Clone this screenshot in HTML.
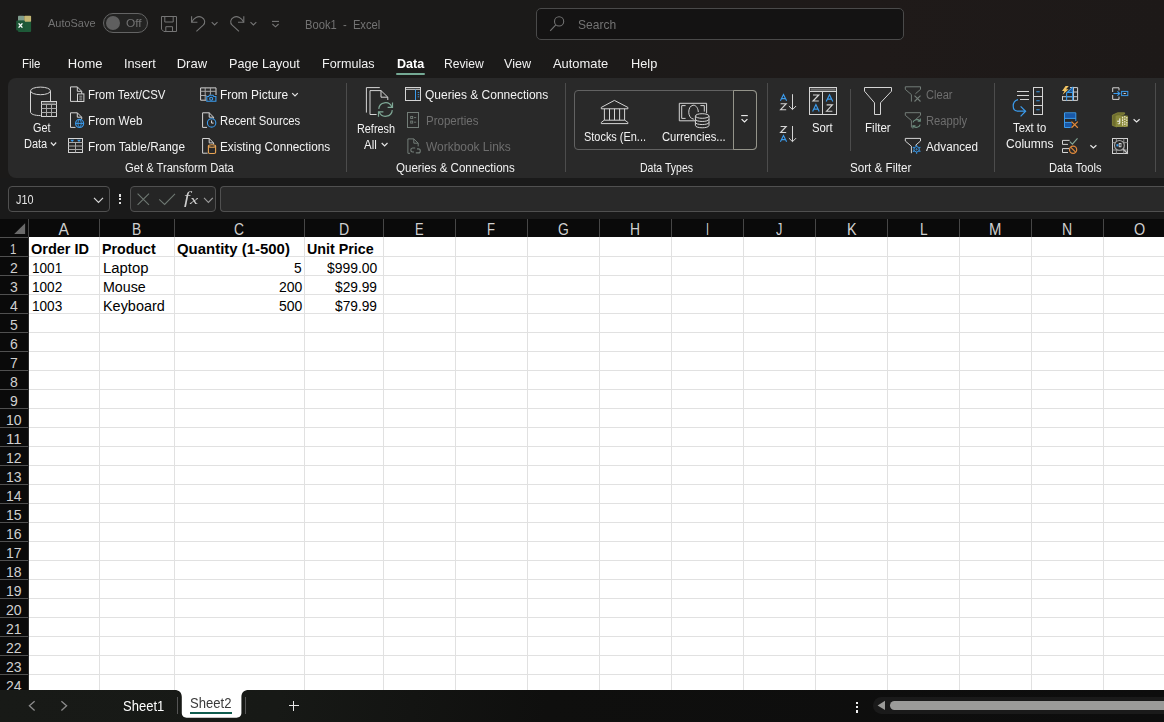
<!DOCTYPE html>
<html><head><meta charset="utf-8"><title>Book1 - Excel</title>
<style>
html,body{margin:0;padding:0;}
html{width:1164px;height:722px;overflow:hidden;}
body{width:1164px;height:722px;overflow:hidden;position:relative;background:#1b1a19;font-family:"Liberation Sans",sans-serif;}
.b{position:absolute;display:block;}
.gs{position:absolute;left:0;top:0;width:1164px;height:722px;will-change:transform;}
.lcd{position:absolute;left:0;top:0;width:1164px;height:722px;}
.t{position:absolute;white-space:nowrap;line-height:1;transform-origin:0 50%;display:block;}
svg{overflow:visible;}
</style></head><body>
<div class="b" style="left:0px;top:0px;width:1164px;height:722px;background:linear-gradient(90deg,#1b1a19 0%,#1b1a19 45%,#1f1a19 75%,#1d1918 100%);"></div>
<div class="b" style="left:536px;top:8px;width:368px;height:32px;background:#141313;box-sizing:border-box;border:1px solid #4a4a4a;border-radius:5px;"></div>
<div class="b" style="left:103px;top:13px;width:45px;height:20px;background:#232322;box-sizing:border-box;border:1px solid #646464;border-radius:10px;"></div>
<div class="b" style="left:106px;top:16.1px;width:13.8px;height:13.8px;background:#5f5f5f;border-radius:7px;"></div>
<div class="b" style="left:396px;top:73px;width:29px;height:2px;background:#74a994;border-radius:1px;"></div>
<div class="b" style="left:8px;top:78px;width:1156px;height:100px;background:#292929;border-radius:8px 0 0 8px;"></div>
<div class="b" style="left:0px;top:178px;width:1164px;height:41px;background:#1a1a1a;"></div>
<div class="b" style="left:346px;top:83px;width:1px;height:89px;background:#4c4c4c;"></div>
<div class="b" style="left:565px;top:83px;width:1px;height:89px;background:#4c4c4c;"></div>
<div class="b" style="left:767px;top:83px;width:1px;height:89px;background:#4c4c4c;"></div>
<div class="b" style="left:994px;top:83px;width:1px;height:89px;background:#4c4c4c;"></div>
<div class="b" style="left:1155px;top:83px;width:1px;height:89px;background:#4c4c4c;"></div>
<div class="b" style="left:850px;top:89px;width:1px;height:62px;background:#4c4c4c;"></div>
<div class="b" style="left:574px;top:90px;width:183px;height:60px;box-sizing:border-box;border:1px solid #626262;border-radius:4px;"></div>
<div class="b" style="left:733px;top:90px;width:24px;height:60px;box-sizing:border-box;border:1px solid #94948a;border-radius:0 4px 4px 0;"></div>
<div class="b" style="left:8px;top:186px;width:102px;height:26px;background:#1c1c1c;box-sizing:border-box;border:1px solid #505050;border-radius:4px;"></div>
<div class="b" style="left:130px;top:186px;width:86px;height:26px;background:#252525;box-sizing:border-box;border:1px solid #505050;border-radius:4px;"></div>
<div class="b" style="left:220px;top:186px;width:944px;height:26px;background:#292929;box-sizing:border-box;border:1px solid #505050;border-right:none;border-radius:4px 0 0 4px;"></div>
<div class="b" style="left:118.8px;top:194.1px;width:2.6px;height:2.5px;background:#e0e0e0;"></div>
<div class="b" style="left:118.8px;top:197.8px;width:2.6px;height:2.5px;background:#e0e0e0;"></div>
<div class="b" style="left:118.8px;top:201.6px;width:2.6px;height:2.5px;background:#e0e0e0;"></div>
<div class="b" style="left:0px;top:219px;width:1164px;height:471px;background:#ffffff;"></div>
<div class="b" style="left:0px;top:219px;width:1164px;height:18px;background:#0a0a0a;"></div>
<div class="b" style="left:0px;top:219px;width:28px;height:471px;background:#0a0a0a;"></div>
<svg class="b" style="left:11px;top:222px" width="15" height="15" viewBox="0 0 15 15"><path d="M14.1 1.2 L14.1 12.1 L3.2 12.1 Z" fill="#6a6a6a"/></svg>
<div class="b" style="left:28px;top:237px;width:1px;height:453px;background:#e1e1e1;"></div>
<div class="b" style="left:28px;top:219px;width:1px;height:18px;background:#464646;"></div>
<div class="b" style="left:99px;top:237px;width:1px;height:453px;background:#e1e1e1;"></div>
<div class="b" style="left:99px;top:219px;width:1px;height:18px;background:#464646;"></div>
<div class="b" style="left:174px;top:237px;width:1px;height:453px;background:#e1e1e1;"></div>
<div class="b" style="left:174px;top:219px;width:1px;height:18px;background:#464646;"></div>
<div class="b" style="left:304px;top:237px;width:1px;height:453px;background:#e1e1e1;"></div>
<div class="b" style="left:304px;top:219px;width:1px;height:18px;background:#464646;"></div>
<div class="b" style="left:383px;top:237px;width:1px;height:453px;background:#e1e1e1;"></div>
<div class="b" style="left:383px;top:219px;width:1px;height:18px;background:#464646;"></div>
<div class="b" style="left:455px;top:237px;width:1px;height:453px;background:#e1e1e1;"></div>
<div class="b" style="left:455px;top:219px;width:1px;height:18px;background:#464646;"></div>
<div class="b" style="left:527px;top:237px;width:1px;height:453px;background:#e1e1e1;"></div>
<div class="b" style="left:527px;top:219px;width:1px;height:18px;background:#464646;"></div>
<div class="b" style="left:599px;top:237px;width:1px;height:453px;background:#e1e1e1;"></div>
<div class="b" style="left:599px;top:219px;width:1px;height:18px;background:#464646;"></div>
<div class="b" style="left:671px;top:237px;width:1px;height:453px;background:#e1e1e1;"></div>
<div class="b" style="left:671px;top:219px;width:1px;height:18px;background:#464646;"></div>
<div class="b" style="left:743px;top:237px;width:1px;height:453px;background:#e1e1e1;"></div>
<div class="b" style="left:743px;top:219px;width:1px;height:18px;background:#464646;"></div>
<div class="b" style="left:815px;top:237px;width:1px;height:453px;background:#e1e1e1;"></div>
<div class="b" style="left:815px;top:219px;width:1px;height:18px;background:#464646;"></div>
<div class="b" style="left:887px;top:237px;width:1px;height:453px;background:#e1e1e1;"></div>
<div class="b" style="left:887px;top:219px;width:1px;height:18px;background:#464646;"></div>
<div class="b" style="left:959px;top:237px;width:1px;height:453px;background:#e1e1e1;"></div>
<div class="b" style="left:959px;top:219px;width:1px;height:18px;background:#464646;"></div>
<div class="b" style="left:1031px;top:237px;width:1px;height:453px;background:#e1e1e1;"></div>
<div class="b" style="left:1031px;top:219px;width:1px;height:18px;background:#464646;"></div>
<div class="b" style="left:1103px;top:237px;width:1px;height:453px;background:#e1e1e1;"></div>
<div class="b" style="left:1103px;top:219px;width:1px;height:18px;background:#464646;"></div>
<div class="b" style="left:29px;top:256px;width:1135px;height:1px;background:#e1e1e1;"></div>
<div class="b" style="left:0px;top:256px;width:29px;height:1px;background:#505050;"></div>
<div class="b" style="left:29px;top:275px;width:1135px;height:1px;background:#e1e1e1;"></div>
<div class="b" style="left:0px;top:275px;width:29px;height:1px;background:#505050;"></div>
<div class="b" style="left:29px;top:294px;width:1135px;height:1px;background:#e1e1e1;"></div>
<div class="b" style="left:0px;top:294px;width:29px;height:1px;background:#505050;"></div>
<div class="b" style="left:29px;top:313px;width:1135px;height:1px;background:#e1e1e1;"></div>
<div class="b" style="left:0px;top:313px;width:29px;height:1px;background:#505050;"></div>
<div class="b" style="left:29px;top:332px;width:1135px;height:1px;background:#e1e1e1;"></div>
<div class="b" style="left:0px;top:332px;width:29px;height:1px;background:#505050;"></div>
<div class="b" style="left:29px;top:351px;width:1135px;height:1px;background:#e1e1e1;"></div>
<div class="b" style="left:0px;top:351px;width:29px;height:1px;background:#505050;"></div>
<div class="b" style="left:29px;top:370px;width:1135px;height:1px;background:#e1e1e1;"></div>
<div class="b" style="left:0px;top:370px;width:29px;height:1px;background:#505050;"></div>
<div class="b" style="left:29px;top:389px;width:1135px;height:1px;background:#e1e1e1;"></div>
<div class="b" style="left:0px;top:389px;width:29px;height:1px;background:#505050;"></div>
<div class="b" style="left:29px;top:408px;width:1135px;height:1px;background:#e1e1e1;"></div>
<div class="b" style="left:0px;top:408px;width:29px;height:1px;background:#505050;"></div>
<div class="b" style="left:29px;top:427px;width:1135px;height:1px;background:#e1e1e1;"></div>
<div class="b" style="left:0px;top:427px;width:29px;height:1px;background:#505050;"></div>
<div class="b" style="left:29px;top:446px;width:1135px;height:1px;background:#e1e1e1;"></div>
<div class="b" style="left:0px;top:446px;width:29px;height:1px;background:#505050;"></div>
<div class="b" style="left:29px;top:465px;width:1135px;height:1px;background:#e1e1e1;"></div>
<div class="b" style="left:0px;top:465px;width:29px;height:1px;background:#505050;"></div>
<div class="b" style="left:29px;top:484px;width:1135px;height:1px;background:#e1e1e1;"></div>
<div class="b" style="left:0px;top:484px;width:29px;height:1px;background:#505050;"></div>
<div class="b" style="left:29px;top:503px;width:1135px;height:1px;background:#e1e1e1;"></div>
<div class="b" style="left:0px;top:503px;width:29px;height:1px;background:#505050;"></div>
<div class="b" style="left:29px;top:522px;width:1135px;height:1px;background:#e1e1e1;"></div>
<div class="b" style="left:0px;top:522px;width:29px;height:1px;background:#505050;"></div>
<div class="b" style="left:29px;top:541px;width:1135px;height:1px;background:#e1e1e1;"></div>
<div class="b" style="left:0px;top:541px;width:29px;height:1px;background:#505050;"></div>
<div class="b" style="left:29px;top:560px;width:1135px;height:1px;background:#e1e1e1;"></div>
<div class="b" style="left:0px;top:560px;width:29px;height:1px;background:#505050;"></div>
<div class="b" style="left:29px;top:579px;width:1135px;height:1px;background:#e1e1e1;"></div>
<div class="b" style="left:0px;top:579px;width:29px;height:1px;background:#505050;"></div>
<div class="b" style="left:29px;top:598px;width:1135px;height:1px;background:#e1e1e1;"></div>
<div class="b" style="left:0px;top:598px;width:29px;height:1px;background:#505050;"></div>
<div class="b" style="left:29px;top:617px;width:1135px;height:1px;background:#e1e1e1;"></div>
<div class="b" style="left:0px;top:617px;width:29px;height:1px;background:#505050;"></div>
<div class="b" style="left:29px;top:636px;width:1135px;height:1px;background:#e1e1e1;"></div>
<div class="b" style="left:0px;top:636px;width:29px;height:1px;background:#505050;"></div>
<div class="b" style="left:29px;top:655px;width:1135px;height:1px;background:#e1e1e1;"></div>
<div class="b" style="left:0px;top:655px;width:29px;height:1px;background:#505050;"></div>
<div class="b" style="left:29px;top:674px;width:1135px;height:1px;background:#e1e1e1;"></div>
<div class="b" style="left:0px;top:674px;width:29px;height:1px;background:#505050;"></div>
<div class="b" style="left:28px;top:237px;width:1px;height:453px;background:#2a2a2a;"></div>
<div class="b" style="left:0px;top:237px;width:28px;height:1px;background:#505050;"></div>
<div class="lcd"><span class="t" id="t45" style="left:58.60px;top:222.29px;font-size:15.6px;color:#d0d0d0;">A</span>
<span class="t" id="t46" style="left:132.20px;top:222.29px;font-size:15.6px;color:#d0d0d0;transform:scaleX(0.8841);">B</span>
<span class="t" id="t47" style="left:234.30px;top:222.29px;font-size:15.6px;color:#d0d0d0;transform:scaleX(0.8877);">C</span>
<span class="t" id="t48" style="left:338.70px;top:222.29px;font-size:15.6px;color:#d0d0d0;transform:scaleX(0.9054);">D</span>
<span class="t" id="t49" style="left:415.00px;top:222.29px;font-size:15.6px;color:#d0d0d0;transform:scaleX(0.8264);">E</span>
<span class="t" id="t50" style="left:487.30px;top:222.29px;font-size:15.6px;color:#d0d0d0;transform:scaleX(0.8393);">F</span>
<span class="t" id="t51" style="left:557.90px;top:222.29px;font-size:15.6px;color:#d0d0d0;transform:scaleX(0.8896);">G</span>
<span class="t" id="t52" style="left:630.30px;top:222.29px;font-size:15.6px;color:#d0d0d0;transform:scaleX(0.8877);">H</span>
<span class="t" id="t53" style="left:705.80px;top:222.29px;font-size:15.6px;color:#d0d0d0;transform:scaleX(0.6906);">I</span>
<span class="t" id="t54" style="left:776.10px;top:222.29px;font-size:15.6px;color:#d0d0d0;transform:scaleX(0.8208);">J</span>
<span class="t" id="t55" style="left:846.50px;top:222.29px;font-size:15.6px;color:#d0d0d0;transform:scaleX(0.9225);">K</span>
<span class="t" id="t56" style="left:919.50px;top:222.29px;font-size:15.6px;color:#d0d0d0;transform:scaleX(0.8748);">L</span>
<span class="t" id="t57" style="left:989.10px;top:222.29px;font-size:15.6px;color:#d0d0d0;transform:scaleX(0.9538);">M</span>
<span class="t" id="t58" style="left:1062.20px;top:222.29px;font-size:15.6px;color:#d0d0d0;transform:scaleX(0.9054);">N</span>
<span class="t" id="t59" style="left:1133.70px;top:222.29px;font-size:15.6px;color:#d0d0d0;transform:scaleX(0.9225);">O</span>
<span class="t" id="t60" style="left:10.30px;top:241.05px;font-size:15.3px;color:#d0d0d0;transform:scaleX(0.7516);">1</span>
<span class="t" id="t61" style="left:10.10px;top:260.05px;font-size:15.3px;color:#d0d0d0;transform:scaleX(0.9160);">2</span>
<span class="t" id="t62" style="left:10.10px;top:279.05px;font-size:15.3px;color:#d0d0d0;transform:scaleX(0.9160);">3</span>
<span class="t" id="t63" style="left:10.10px;top:298.05px;font-size:15.3px;color:#d0d0d0;transform:scaleX(0.9160);">4</span>
<span class="t" id="t64" style="left:10.10px;top:317.05px;font-size:15.3px;color:#d0d0d0;transform:scaleX(0.9160);">5</span>
<span class="t" id="t65" style="left:10.10px;top:336.05px;font-size:15.3px;color:#d0d0d0;transform:scaleX(0.9160);">6</span>
<span class="t" id="t66" style="left:10.10px;top:355.05px;font-size:15.3px;color:#d0d0d0;transform:scaleX(0.9160);">7</span>
<span class="t" id="t67" style="left:10.10px;top:374.05px;font-size:15.3px;color:#d0d0d0;transform:scaleX(0.9160);">8</span>
<span class="t" id="t68" style="left:10.10px;top:393.05px;font-size:15.3px;color:#d0d0d0;transform:scaleX(0.9160);">9</span>
<span class="t" id="t69" style="left:6.20px;top:412.05px;font-size:15.3px;color:#d0d0d0;transform:scaleX(0.9168);">10</span>
<span class="t" id="t70" style="left:6.20px;top:431.05px;font-size:15.3px;color:#d0d0d0;transform:scaleX(0.9817);">11</span>
<span class="t" id="t71" style="left:6.20px;top:450.05px;font-size:15.3px;color:#d0d0d0;transform:scaleX(0.9168);">12</span>
<span class="t" id="t72" style="left:6.20px;top:469.05px;font-size:15.3px;color:#d0d0d0;transform:scaleX(0.9168);">13</span>
<span class="t" id="t73" style="left:6.20px;top:488.05px;font-size:15.3px;color:#d0d0d0;transform:scaleX(0.9168);">14</span>
<span class="t" id="t74" style="left:6.20px;top:507.05px;font-size:15.3px;color:#d0d0d0;transform:scaleX(0.9168);">15</span>
<span class="t" id="t75" style="left:6.20px;top:526.05px;font-size:15.3px;color:#d0d0d0;transform:scaleX(0.9168);">16</span>
<span class="t" id="t76" style="left:6.20px;top:545.05px;font-size:15.3px;color:#d0d0d0;transform:scaleX(0.9168);">17</span>
<span class="t" id="t77" style="left:6.20px;top:564.05px;font-size:15.3px;color:#d0d0d0;transform:scaleX(0.9168);">18</span>
<span class="t" id="t78" style="left:6.20px;top:583.05px;font-size:15.3px;color:#d0d0d0;transform:scaleX(0.9168);">19</span>
<span class="t" id="t79" style="left:6.20px;top:602.05px;font-size:15.3px;color:#d0d0d0;transform:scaleX(0.9168);">20</span>
<span class="t" id="t80" style="left:6.20px;top:621.05px;font-size:15.3px;color:#d0d0d0;transform:scaleX(0.9168);">21</span>
<span class="t" id="t81" style="left:6.20px;top:640.05px;font-size:15.3px;color:#d0d0d0;transform:scaleX(0.9168);">22</span>
<span class="t" id="t82" style="left:6.20px;top:659.05px;font-size:15.3px;color:#d0d0d0;transform:scaleX(0.9168);">23</span>
<span class="t" id="t83" style="left:6.20px;top:678.05px;font-size:15.3px;color:#d0d0d0;transform:scaleX(0.9168);">24</span>
<span class="t" id="t84" style="left:31.20px;top:241.76px;font-size:14.7px;color:#000000;font-weight:bold;transform:scaleX(0.9878);">Order ID</span>
<span class="t" id="t85" style="left:102.30px;top:241.76px;font-size:14.7px;color:#000000;font-weight:bold;transform:scaleX(0.9676);">Product</span>
<span class="t" id="t86" style="left:176.60px;top:241.76px;font-size:14.7px;color:#000000;font-weight:bold;transform:scaleX(1.0171);">Quantity (1-500)</span>
<span class="t" id="t87" style="left:307.00px;top:241.76px;font-size:14.7px;color:#000000;font-weight:bold;transform:scaleX(0.9736);">Unit Price</span>
<span class="t" id="t88" style="left:31.75px;top:260.76px;font-size:14.7px;color:#000000;transform:scaleX(0.9254);">1001</span>
<span class="t" id="t89" style="left:31.75px;top:279.76px;font-size:14.7px;color:#000000;transform:scaleX(0.9254);">1002</span>
<span class="t" id="t90" style="left:31.75px;top:298.76px;font-size:14.7px;color:#000000;transform:scaleX(0.9254);">1003</span>
<span class="t" id="t91" style="left:102.75px;top:260.76px;font-size:14.7px;color:#000000;transform:scaleX(1.0125);">Laptop</span>
<span class="t" id="t92" style="left:102.75px;top:279.76px;font-size:14.7px;color:#000000;transform:scaleX(0.9695);">Mouse</span>
<span class="t" id="t93" style="left:102.75px;top:298.76px;font-size:14.7px;color:#000000;transform:scaleX(0.9821);">Keyboard</span>
<span class="t" id="t94" style="left:293.60px;top:260.76px;font-size:14.7px;color:#000000;transform:scaleX(0.9361);">5</span>
<span class="t" id="t95" style="left:278.60px;top:279.76px;font-size:14.7px;color:#000000;transform:scaleX(0.9504);">200</span>
<span class="t" id="t96" style="left:278.60px;top:298.76px;font-size:14.7px;color:#000000;transform:scaleX(0.9504);">500</span>
<span class="t" id="t97" style="left:326.80px;top:260.76px;font-size:14.7px;color:#000000;transform:scaleX(0.9474);">$999.00</span>
<span class="t" id="t98" style="left:334.50px;top:279.76px;font-size:14.7px;color:#000000;transform:scaleX(0.9346);">$29.99</span>
<span class="t" id="t99" style="left:334.50px;top:298.76px;font-size:14.7px;color:#000000;transform:scaleX(0.9346);">$79.99</span></div>
<div class="b" style="left:0px;top:690px;width:1164px;height:32px;background:linear-gradient(100deg,#181a17 0%,#171916 24%,#0f0f0e 47%,#0d0d0d 100%);"></div>
<svg class="b" style="left:0px;top:0px" width="1164" height="722" viewBox="0 0 1164 722"><path d="M174.5 690 C179 690 181.8 692.6 181.8 697 V713 C181.8 715.8 184 717.7 186.6 717.7 H236.6 C239.2 717.7 241.4 715.8 241.4 713 V697 C241.4 692.6 244.2 690 248.7 690 Z" fill="#ffffff"/></svg>
<div class="b" style="left:190px;top:712px;width:42px;height:2px;background:#0f5c4e;"></div>
<div class="b" style="left:177px;top:697px;width:1px;height:17px;background:#555555;"></div>
<div class="b" style="left:245px;top:697px;width:1px;height:17px;background:#555555;"></div>
<svg class="b" style="left:24px;top:697px" width="50" height="18" viewBox="0 0 50 18"><path d="M10.6 4.2 L5.4 8.8 L10.6 13.4" fill="none" stroke="#8c8c8c" stroke-width="1.3"/><path d="M37.4 4.2 L42.6 8.8 L37.4 13.4" fill="none" stroke="#8c8c8c" stroke-width="1.3"/></svg>
<div class="b" style="left:288.5px;top:705.2px;width:10.5px;height:1.2px;background:#e6e6e6;"></div>
<div class="b" style="left:293.1px;top:700.6px;width:1.2px;height:10.5px;background:#e6e6e6;"></div>
<div class="b" style="left:856px;top:701.5px;width:2.4px;height:2.4px;background:#f0f0f0;"></div>
<div class="b" style="left:856px;top:706px;width:2.4px;height:2.4px;background:#f0f0f0;"></div>
<div class="b" style="left:856px;top:710.4px;width:2.4px;height:2.4px;background:#f0f0f0;"></div>
<div class="b" style="left:873px;top:697px;width:291px;height:17px;background:#1a1a1a;border-radius:8.5px 0 0 8.5px;"></div>
<svg class="b" style="left:876px;top:699px" width="12" height="13" viewBox="0 0 12 13"><path d="M9 1.8 L1.6 6.4 L9 11 Z" fill="#9a9a98"/></svg>
<div class="b" style="left:890px;top:701px;width:274px;height:9px;background:#9b9b99;border-radius:4.5px 0 0 4.5px;"></div>
<svg class="b" style="left:0;top:0" width="1164" height="722" viewBox="0 0 1164 722" fill="none" stroke-linecap="butt" stroke-linejoin="miter"><rect x="18" y="15.8" width="6.2" height="5.4" rx="0.8" fill="#7e9c8c"/>
<rect x="24.2" y="15.8" width="6.9" height="6.2" rx="0.8" fill="#c3b674"/>
<path d="M18 20.8 H24.2 V21.8 H31.1 V31 Q31.1 32 30.1 32 H19 Q18 32 18 31 Z" fill="#1e5a38"/>
<rect x="16.2" y="20.4" width="8.6" height="10.2" rx="1" fill="#1d5736"/>
<path d="M18.6 23.4 L22.4 27.6 M22.4 23.4 L18.6 27.6" stroke="#ffffff" stroke-width="1.4" fill="none" />
<path d="M161.5 16.5 H176.5 V31.5 H163.8 L161.5 29.2 Z" stroke="#757575" stroke-width="1" fill="none" />
<path d="M164.8 16.5 V22 H173.2 V16.5" stroke="#757575" stroke-width="1" fill="none" />
<path d="M165.8 31.5 V26.7 H172.5 V31.5" stroke="#757575" stroke-width="1" fill="none" />
<path d="M191.6 16.3 V22.3 H197.4" stroke="#757575" stroke-width="1.1" fill="none" />
<path d="M191.8 22.1 C193.6 18 198 15.4 201.6 17.2 C205.2 19 205.6 22.8 203.2 25.2 L196.4 31.3" stroke="#757575" stroke-width="1.1" fill="none" />
<path d="M211.7 22.2 L214.6 25 L217.5 22.2" stroke="#757575" stroke-width="1.1" fill="none" />
<path d="M243.8 16.3 V22.3 H238" stroke="#757575" stroke-width="1.1" fill="none" />
<path d="M243.6 22.1 C241.8 18 237.4 15.4 233.8 17.2 C230.2 19 229.8 22.8 232.2 25.2 L239 31.3" stroke="#757575" stroke-width="1.1" fill="none" />
<path d="M250.5 22.2 L253.4 25 L256.3 22.2" stroke="#757575" stroke-width="1.1" fill="none" />
<path d="M272 21.4 H279" stroke="#757575" stroke-width="1.1" fill="none" />
<path d="M272.4 24 L275.5 26.8 L278.6 24" stroke="#757575" stroke-width="1.1" fill="none" />
<circle cx="559.1" cy="21.4" r="4.6" stroke="#727272" stroke-width="1.1" fill="none"/>
<path d="M555.8 24.8 L550.2 30.8" stroke="#727272" stroke-width="1.1" fill="none" />
<path d="M30.5 91.2 V112 C30.5 114 34.5 115.6 40.6 115.6" stroke="#d4d4d4" stroke-width="1" fill="none" />
<path d="M50.5 91.2 V101" stroke="#d4d4d4" stroke-width="1" fill="none" />
<ellipse cx="40.5" cy="90.9" rx="10" ry="3.8" stroke="#d4d4d4" stroke-width="1" fill="none"/>
<rect x="41.5" y="101.5" width="15" height="15" rx="0" stroke="#d4d4d4" stroke-width="1" fill="#292929"/>
<rect x="42.4" y="102.4" width="13.2" height="1.8" fill="#6a6a6a"/>
<path d="M41.5 104.5 H56.5 M41.5 108.5 H56.5 M41.5 112.5 H56.5 M46.5 104.5 V116.5 M51.5 104.5 V116.5" stroke="#a8a8a8" stroke-width="1" fill="none" />
<path d="M50.9 142.5 L53.55 145.3 L56.2 142.5" stroke="#e6e6e6" stroke-width="1.2" fill="none" />
<path d="M81.7 93.9 V91.30000000000001 L77.3 86.9 H70.5 V101.4 H77.4 M77.3 86.9 V91.30000000000001 H81.7" stroke="#d4d4d4" stroke-width="1" fill="none" />
<rect x="77.5" y="93.9" width="6.4" height="7.6" rx="0" stroke="#d4d4d4" stroke-width="1" fill="#292929"/>
<path d="M79.3 96.2 H82.2 M79.3 98 H82.2 M79.3 99.8 H82.2" stroke="#bdbdbd" stroke-width="0.8" fill="none" />
<path d="M81.7 119 V117.2 L77.3 112.8 H70.5 V127.4 H75.5 M77.3 112.8 V117.2 H81.7" stroke="#d4d4d4" stroke-width="1" fill="none" />
<circle cx="79.6" cy="123.4" r="4.0" stroke="#3b9bec" stroke-width="1.2" fill="none"/>
<path d="M75.6 123.4 H83.6 M79.6 119.4 C77.4 121.6 77.4 125.2 79.6 127.4 M79.6 119.4 C81.8 121.6 81.8 125.2 79.6 127.4" stroke="#3b9bec" stroke-width="1.0" fill="none" />
<rect x="68.5" y="138.5" width="14" height="14" rx="0" stroke="#d4d4d4" stroke-width="1" fill="none"/>
<path d="M68.5 142.5 H82.5 M68.5 146 H82.5 M68.5 149.5 H82.5 M75.5 142.5 V152.5" stroke="#a8a8a8" stroke-width="1" fill="none" />
<path d="M70.2 139.7 H74.2 L72.2 142 Z M77 139.7 H81 L79 142 Z" fill="#3b9bec"/>
<path d="M216 95 V87.9 H200.6 V100.2 H206" stroke="#d4d4d4" stroke-width="1" fill="none" />
<path d="M200.6 91.3 H216 M200.6 95.5 H206.4 M205.2 87.9 V100.2 M210.4 87.9 V94.8" stroke="#a8a8a8" stroke-width="1" fill="none" />
<path d="M206.8 96.5 H208.6 L209.4 95.3 H213 L213.8 96.5 H215.9 V101.3 H206.8 Z" stroke="#3b9bec" stroke-width="1.1" fill="#292929" />
<circle cx="211.2" cy="98.7" r="1.5" stroke="#3b9bec" stroke-width="1.1" fill="none"/>
<path d="M292.2 93.2 L295.0 96 L297.8 93.2" stroke="#e6e6e6" stroke-width="1.2" fill="none" />
<path d="M213.6 118.6 V117.2 L209.2 112.8 H202.6 V127.4 H207 M209.2 112.8 V117.2 H213.6" stroke="#d4d4d4" stroke-width="1" fill="none" />
<circle cx="211.6" cy="122.9" r="4.2" stroke="#3b9bec" stroke-width="1.1" fill="none"/>
<path d="M211.6 120.4 V123.1 H213.6" stroke="#e0e0e0" stroke-width="1" fill="none" />
<path d="M213.6 144.4 V142.9 L209.2 138.5 H202.6 V153.2 H207.6 M209.2 138.5 V142.9 H213.6" stroke="#d4d4d4" stroke-width="1" fill="none" />
<path d="M208.4 146 V152.4 C208.4 153.9 215.6 153.9 215.6 152.4 V146" stroke="#e9a555" stroke-width="1.1" fill="none" />
<ellipse cx="212" cy="146" rx="3.6" ry="1.3" stroke="#e9a555" stroke-width="1.1" fill="none"/>
<path d="M379.8 87.6 H366.4 V112.6" stroke="#d4d4d4" stroke-width="1" fill="none" />
<path d="M387.8 100 V97.2 L381 90.6 H370 V114.5 H376.6 M381 90.6 V97.2 H387.8" stroke="#d4d4d4" stroke-width="1" fill="none" />
<path d="M378.73 108.91 A6.8 6.8 0 0 1 391.80 106.95" stroke="#7fa896" stroke-width="1.2" fill="none" />
<path d="M392.5 102.4 V107.3 H387.6" stroke="#7fa896" stroke-width="1.2" fill="none" />
<path d="M392.27 110.09 A6.8 6.8 0 0 1 379.20 112.05" stroke="#7fa896" stroke-width="1.2" fill="none" />
<path d="M378.5 116.8 V111.9 H383.4" stroke="#7fa896" stroke-width="1.2" fill="none" />
<path d="M381.7 143 L384.6 145.9 L387.5 143" stroke="#e6e6e6" stroke-width="1.2" fill="none" />
<rect x="405.5" y="87.5" width="15" height="13" rx="0" stroke="#d4d4d4" stroke-width="1" fill="none"/>
<path d="M405.5 89.3 H420.5" stroke="#d4d4d4" stroke-width="1" fill="none" />
<path d="M415.5 89.6 V100" stroke="#3b9bec" stroke-width="1" fill="none" />
<path d="M417.7 92.4 H419.2 M417.7 94.6 H419.2 M417.7 96.8 H419.2" stroke="#3b9bec" stroke-width="0.9" fill="none" />
<rect x="407.5" y="112.5" width="11" height="15" rx="0" stroke="#737d78" stroke-width="1" fill="none"/>
<rect x="410.7" y="116.5" width="2" height="2" rx="0" stroke="#737d78" stroke-width="0.9" fill="none"/>
<rect x="410.7" y="121.1" width="2" height="2" rx="0" stroke="#737d78" stroke-width="0.9" fill="none"/>
<path d="M414 117.6 H416.2 M414 122.2 H416.2" stroke="#737d78" stroke-width="0.9" fill="none" />
<path d="M418.2 146.4 V143.2 L413.8 138.9 H407.9 V153.3 H410 M413.8 138.9 V143.2 H418.2" stroke="#737d78" stroke-width="1" fill="none" />
<path d="M415.2 148 H412.6 C410.2 148 410.2 152 412.6 152 H414 M415.8 152.9 H418.4 C420.9 152.9 420.9 148.9 418.4 148.9 H417" stroke="#737d78" stroke-width="1.1" fill="none" />
<path d="M614.4 100.4 L601.3 107.4 V108.8 H627.9 V107.4 Z" stroke="#d4d4d4" stroke-width="1" fill="none" />
<path d="M604.4 108.8 V120.1 M609.5 108.8 V120.1 M614.5 108.8 V120.1 M619.6 108.8 V120.1 M624.6 108.8 V120.1" stroke="#d4d4d4" stroke-width="1" fill="none" />
<path d="M604.2 120.2 H624.8 L627.9 122.4 V123.6 H601.3 V122.4 Z" stroke="#d4d4d4" stroke-width="1" fill="none" />
<path d="M695.4 120.8 H679.3 V103.3 H706.6 V113.2" stroke="#d4d4d4" stroke-width="1" fill="none" />
<path d="M685.6 105.6 H681.7 V118.4 H685.6 M700.4 105.6 H704.3 V111.6" stroke="#d4d4d4" stroke-width="1" fill="none" />
<path d="M693.8 119.2 C687.2 118.6 687.2 106 693.1 105.2 C696.6 105 698.2 109.2 698.3 112" stroke="#d4d4d4" stroke-width="1" fill="none" />
<path d="M695.4 116 V125.4 C695.4 128.6 709 128.6 709 125.4 V116" stroke="#d4d4d4" stroke-width="1" fill="#292929" />
<ellipse cx="702.2" cy="116" rx="6.8" ry="2.3" stroke="#d4d4d4" stroke-width="1" fill="#292929"/>
<path d="M695.4 119.2 C695.4 122.2 709 122.2 709 119.2 M695.4 122.3 C695.4 125.3 709 125.3 709 122.3" stroke="#d4d4d4" stroke-width="1" fill="none" />
<path d="M741.2 115.6 H747.8" stroke="#f0f0f0" stroke-width="1.1" fill="none" />
<path d="M741.6 119.1 L744.5 121.9 L747.4 119.1" stroke="#f0f0f0" stroke-width="1.2" fill="none" />
<path d="M780.4 100.8 L783.5 94.6 L786.6 100.8 M781.64 98.692 H785.36" stroke="#3b9bec" stroke-width="1.15" fill="none" />
<path d="M780.6 103.7 H786.2 L780.6 109.7 H786.2" stroke="#d4d4d4" stroke-width="1.15" fill="none" />
<path d="M792.5 94.2 V109.4 M788.9 106 L792.5 109.6 L796.1 106" stroke="#d4d4d4" stroke-width="1" fill="none" />
<path d="M780.6 126.5 H786.2 L780.6 132.5 H786.2" stroke="#d4d4d4" stroke-width="1.15" fill="none" />
<path d="M780.4 141.8 L783.5 135.6 L786.6 141.8 M781.64 139.692 H785.36" stroke="#3b9bec" stroke-width="1.15" fill="none" />
<path d="M792.5 126 V141.5 M788.9 138.1 L792.5 141.7 L796.1 138.1" stroke="#d4d4d4" stroke-width="1" fill="none" />
<rect x="809.5" y="87.5" width="27" height="27" rx="0" stroke="#d4d4d4" stroke-width="1" fill="none"/>
<rect x="810.6" y="88.5" width="25" height="2.2" fill="#6e6e6e"/>
<path d="M809.5 91.5 H836.5 M822.5 91.5 V114.5" stroke="#d4d4d4" stroke-width="1" fill="none" />
<path d="M813 95 H818.8 L813 101 H818.8" stroke="#d4d4d4" stroke-width="1.15" fill="none" />
<path d="M812.6 111.4 L815.9000000000001 104.6 L819.2 111.4 M813.9200000000001 109.08800000000001 H817.88" stroke="#3b9bec" stroke-width="1.15" fill="none" />
<path d="M826.2 101.4 L829.5 94.8 L832.8 101.4 M827.52 99.156 H831.48" stroke="#3b9bec" stroke-width="1.15" fill="none" />
<path d="M826.6 104.8 H832.4 L826.6 111.2 H832.4" stroke="#d4d4d4" stroke-width="1.15" fill="none" />
<path d="M864.5 87.5 H891.5 V91.2 L880.5 102.8 V114.5 H874.5 V102.8 L864.5 91.2 Z" stroke="#d4d4d4" stroke-width="1" fill="none" />
<path d="M911.4 101.6 V94.6 L905.3 89.39999999999999 V86.8 H920.5 V89.39999999999999 L915.4 93.8" stroke="#737d78" stroke-width="1" fill="none" />
<path d="M914.5 95.7 L920.5 101.5 M920.5 95.7 L914.5 101.5" stroke="#737d78" stroke-width="1.1" fill="none" />
<path d="M911.4 127.5 V120.5 L905.3 115.3 V112.7 H920.5 V115.3 L915.4 119.7" stroke="#737d78" stroke-width="1" fill="none" />
<path d="M913 122.4 C913.8 119.6 917.8 118.6 920 120.8 M920.3 118.6 V121.2 H917.7" stroke="#6d8f80" stroke-width="1.1" fill="none" />
<path d="M920.2 124.6 C919.4 127.4 915.4 128.4 913.2 126.2 M912.9 128.4 V125.8 H915.5" stroke="#6d8f80" stroke-width="1.1" fill="none" />
<path d="M911.4 153.20000000000002 V146.20000000000002 L905.3 141.0 V138.4 H920.5 V141.0 L915.4 145.4" stroke="#d4d4d4" stroke-width="1" fill="none" />
<circle cx="916.6" cy="149.3" r="2.7" stroke="#3b9bec" stroke-width="1" fill="none"/>
<circle cx="916.6" cy="149.3" r="0.6" stroke="#3b9bec" stroke-width="0.9" fill="none"/>
<path d="M916.6 144.9 V146.4 M916.6 152.2 V153.7 M912.8 147.1 L914.1 147.9 M919.1 150.7 L920.4 151.5 M912.8 151.5 L914.1 150.7 M919.1 147.9 L920.4 147.1" stroke="#3b9bec" stroke-width="1.1" fill="none" />
<path d="M1017 91.5 H1029 M1017 95.5 H1029 M1020 99.5 H1029" stroke="#d4d4d4" stroke-width="1" fill="none" />
<path d="M1018 99.6 C1011.6 101.4 1011.6 111.2 1018 111.2 H1025.4" stroke="#3b9bec" stroke-width="1.2" fill="none" />
<path d="M1020.6 106.4 L1025.6 111.2 L1020.6 116.4" stroke="#3b9bec" stroke-width="1.2" fill="none" />
<rect x="1033.5" y="87.5" width="9" height="27" rx="0" stroke="#d4d4d4" stroke-width="1" fill="none"/>
<path d="M1033.5 96.5 H1042.5 M1033.5 105.5 H1042.5" stroke="#d4d4d4" stroke-width="1" fill="none" />
<path d="M1036.3 91.8 H1039.7 M1036.3 100.8 H1039.7 M1036.3 109.8 H1039.7" stroke="#3b9bec" stroke-width="1.1" fill="none" />
<path d="M1070 87.6 H1077.6 V100.4 H1062.5 V96" stroke="#d4d4d4" stroke-width="1" fill="none" />
<path d="M1073.5 87.6 V100.4 M1062.5 96.7 H1077.6 M1072 92 H1077.6" stroke="#c8c8c8" stroke-width="1" fill="none" />
<path d="M1066.6 100.4 V93 L1072.6 87.6 V100.4 M1066.6 92.4 H1072.6 M1066.6 96.7 H1072.6" stroke="#3b9bec" stroke-width="1.1" fill="none" />
<path d="M1069.6 91.6 L1072.6 87.8 V91.6 Z" fill="#1d64b4"/>
<path d="M1065.6 86 L1062 91 H1064.4 L1062.6 94.8 L1068.6 89.2 H1066 L1068.8 86 Z" fill="#f2c463"/>
<rect x="1064.8" y="113.2" width="10.8" height="5" fill="#1858a8"/>
<rect x="1064.8" y="122.6" width="7" height="4.8" fill="#1858a8"/>
<path d="M1075.8 121 V112.8 H1064.5 V127.5 H1070.6 M1064.5 118.4 H1075.8 M1064.5 122.4 H1071.6" stroke="#3b9bec" stroke-width="1" fill="none" />
<path d="M1071.5 121.6 L1077.8 127.8 M1077.8 121.6 L1071.5 127.8" stroke="#e08a3c" stroke-width="1.2" fill="none" />
<path d="M1069.6 140.4 H1062.5 V144.4 H1068 M1069 148.6 H1062.5 V152.5 H1068" stroke="#d4d4d4" stroke-width="1" fill="none" />
<path d="M1069.8 141.6 L1072.4 144.2 L1077.5 138.4" stroke="#84a898" stroke-width="1.1" fill="none" />
<circle cx="1073.1" cy="149.7" r="3.6" stroke="#e08a3c" stroke-width="1.2" fill="none"/>
<path d="M1070.6 147.2 L1075.6 152.2" stroke="#e08a3c" stroke-width="1.2" fill="none" />
<path d="M1090.4 145.2 L1093.4 148 L1096.4 145.2" stroke="#e6e6e6" stroke-width="1.2" fill="none" />
<path d="M1119 90.4 V87.8 H1112.7 V92 M1112.7 95 V99.4 H1119 V96.6" stroke="#d4d4d4" stroke-width="1" fill="none" />
<path d="M1113.4 93.5 H1119.6 M1117.4 91.3 L1119.8 93.5 L1117.4 95.7" stroke="#3b9bec" stroke-width="1.1" fill="none" />
<rect x="1121.6" y="91.4" width="6.2" height="4.2" rx="0" stroke="#3b9bec" stroke-width="1" fill="none"/>
<path d="M1123.6 93.5 H1125.8" stroke="#d0d0d0" stroke-width="1" fill="none" />
<path d="M1112.4 115.2 L1117.6 112.8 H1124.6 L1124.6 114 L1116.8 116.4 V127 L1112.4 125.4 Z" fill="#6f6e2e" stroke="#8a8a3c" stroke-width="0.8"/>
<rect x="1115.6" y="115.4" width="12.4" height="11.6" rx="1.2" fill="#8a8a3c"/>
<path d="M1119.8 118.4 V123 C1119.8 124.2 1118.4 124.2 1118 123.4 M1117.2 121.2 H1119" stroke="#ffffff" stroke-width="1" fill="none" />
<path d="M1122.6 116.8 V125.6 M1124.8 116 V126.2 M1126.8 117 V125.6" stroke="#f0ead0" stroke-width="1.2" fill="none" stroke-dasharray="1.6 0.9"/>
<path d="M1133.6 119.2 L1136.6 122 L1139.6 119.2" stroke="#e6e6e6" stroke-width="1.2" fill="none" />
<rect x="1112.5" y="138.5" width="15" height="15" rx="0" stroke="#d4d4d4" stroke-width="1" fill="none"/>
<path d="M1112.5 142.6 H1127.9 M1112.5 150 H1127.9 M1116.4 138.6 V153.8 M1123.8 138.6 V153.8" stroke="#9a9a9a" stroke-width="0.9" fill="none" />
<circle cx="1119.4" cy="145.4" r="4.9" stroke="#a8a8a8" stroke-width="1.1" fill="#292929"/>
<path d="M1123 149 L1127.8 153.8" stroke="#c0c0c0" stroke-width="1.3" fill="none" />
<rect x="1116.4" y="144.2" width="2" height="2.2" fill="#3b9bec"/>
<rect x="1119.2" y="143.4" width="1.8" height="3.4" rx="0" stroke="#e0e0e0" stroke-width="0.8" fill="none"/>
<path d="M94 197.8 L98.5 202.4 L103 197.8" stroke="#d8d8d8" stroke-width="1.2" fill="none" />
<path d="M137.6 193.6 L149 204.8 M149 193.6 L137.6 204.8" stroke="#6e7872" stroke-width="1.1" fill="none" />
<path d="M159.2 199.4 L164.6 204.4 L175 193.8" stroke="#6e7872" stroke-width="1.1" fill="none" />
<path d="M204 197.8 L208.4 202.4 L212.8 197.8" stroke="#9a9a9a" stroke-width="1.1" fill="none" /></svg>
<div class="gs"><span class="t" id="t0" style="left:48.00px;top:18.31px;font-size:11.8px;color:#737373;transform:scaleX(0.9282);">AutoSave</span>
<span class="t" id="t1" style="left:125.70px;top:18.31px;font-size:11.8px;color:#737373;transform:scaleX(1.0109);">Off</span>
<span class="t" id="t2" style="left:305.25px;top:18.92px;font-size:12.5px;color:#737373;transform:scaleX(0.8950);">Book1&nbsp; -&nbsp; Excel</span>
<span class="t" id="t3" style="left:578.30px;top:18.43px;font-size:13.2px;color:#737373;transform:scaleX(0.9139);">Search</span>
<span class="t" id="t4" style="left:22.00px;top:57.00px;font-size:13px;color:#f2f2f2;transform:scaleX(0.8829);">File</span>
<span class="t" id="t5" style="left:67.80px;top:57.00px;font-size:13px;color:#f2f2f2;">Home</span>
<span class="t" id="t6" style="left:124.25px;top:57.00px;font-size:13px;color:#f2f2f2;transform:scaleX(0.9765);">Insert</span>
<span class="t" id="t7" style="left:176.70px;top:57.00px;font-size:13px;color:#f2f2f2;">Draw</span>
<span class="t" id="t8" style="left:229.25px;top:57.00px;font-size:13px;color:#f2f2f2;transform:scaleX(0.9690);">Page Layout</span>
<span class="t" id="t9" style="left:322.25px;top:57.00px;font-size:13px;color:#f2f2f2;transform:scaleX(0.9689);">Formulas</span>
<span class="t" id="t10" style="left:396.50px;top:57.00px;font-size:13px;color:#ffffff;font-weight:bold;transform:scaleX(0.9667);">Data</span>
<span class="t" id="t11" style="left:444.25px;top:57.00px;font-size:13px;color:#f2f2f2;transform:scaleX(0.9326);">Review</span>
<span class="t" id="t12" style="left:504.00px;top:57.00px;font-size:13px;color:#f2f2f2;transform:scaleX(0.9659);">View</span>
<span class="t" id="t13" style="left:553.00px;top:57.00px;font-size:13px;color:#f2f2f2;transform:scaleX(0.9927);">Automate</span>
<span class="t" id="t14" style="left:631.25px;top:57.00px;font-size:13px;color:#f2f2f2;transform:scaleX(0.9813);">Help</span>
<span class="t" id="t15" style="left:32.50px;top:122.39px;font-size:12.3px;color:#f2f2f2;transform:scaleX(0.8826);">Get</span>
<span class="t" id="t16" style="left:23.75px;top:138.19px;font-size:12.3px;color:#f2f2f2;transform:scaleX(0.8948);">Data</span>
<span class="t" id="t17" style="left:88.25px;top:88.79px;font-size:12.3px;color:#f2f2f2;transform:scaleX(0.9322);">From Text/CSV</span>
<span class="t" id="t18" style="left:88.25px;top:114.89px;font-size:12.3px;color:#f2f2f2;transform:scaleX(0.9533);">From Web</span>
<span class="t" id="t19" style="left:88.25px;top:141.09px;font-size:12.3px;color:#f2f2f2;transform:scaleX(0.9610);">From Table/Range</span>
<span class="t" id="t20" style="left:219.80px;top:88.79px;font-size:12.3px;color:#f2f2f2;transform:scaleX(0.9689);">From Picture</span>
<span class="t" id="t21" style="left:219.80px;top:114.89px;font-size:12.3px;color:#f2f2f2;transform:scaleX(0.9166);">Recent Sources</span>
<span class="t" id="t22" style="left:219.80px;top:141.09px;font-size:12.3px;color:#f2f2f2;transform:scaleX(0.9596);">Existing Connections</span>
<span class="t" id="t23" style="left:124.70px;top:161.59px;font-size:12.3px;color:#f2f2f2;transform:scaleX(0.9096);">Get &amp; Transform Data</span>
<span class="t" id="t24" style="left:357.40px;top:123.09px;font-size:12.3px;color:#f2f2f2;transform:scaleX(0.8824);">Refresh</span>
<span class="t" id="t25" style="left:364.40px;top:138.89px;font-size:12.3px;color:#f2f2f2;transform:scaleX(0.9362);">All</span>
<span class="t" id="t26" style="left:424.75px;top:88.79px;font-size:12.3px;color:#f2f2f2;transform:scaleX(0.9747);">Queries &amp; Connections</span>
<span class="t" id="t27" style="left:425.50px;top:114.89px;font-size:12.3px;color:#6e6e6e;transform:scaleX(0.9367);">Properties</span>
<span class="t" id="t28" style="left:425.50px;top:141.09px;font-size:12.3px;color:#6e6e6e;transform:scaleX(0.9712);">Workbook Links</span>
<span class="t" id="t29" style="left:396.00px;top:161.59px;font-size:12.3px;color:#f2f2f2;transform:scaleX(0.9391);">Queries &amp; Connections</span>
<span class="t" id="t30" style="left:584.30px;top:130.79px;font-size:12.3px;color:#f2f2f2;transform:scaleX(0.8893);">Stocks (En...</span>
<span class="t" id="t31" style="left:661.70px;top:130.79px;font-size:12.3px;color:#f2f2f2;transform:scaleX(0.9137);">Currencies...</span>
<span class="t" id="t32" style="left:639.50px;top:161.59px;font-size:12.3px;color:#f2f2f2;transform:scaleX(0.8551);">Data Types</span>
<span class="t" id="t33" style="left:812.00px;top:122.39px;font-size:12.3px;color:#f2f2f2;transform:scaleX(0.9197);">Sort</span>
<span class="t" id="t34" style="left:865.40px;top:122.39px;font-size:12.3px;color:#f2f2f2;transform:scaleX(0.9404);">Filter</span>
<span class="t" id="t35" style="left:925.50px;top:88.79px;font-size:12.3px;color:#6e6e6e;transform:scaleX(0.9016);">Clear</span>
<span class="t" id="t36" style="left:925.50px;top:114.89px;font-size:12.3px;color:#6e6e6e;transform:scaleX(0.9141);">Reapply</span>
<span class="t" id="t37" style="left:925.50px;top:141.09px;font-size:12.3px;color:#f2f2f2;transform:scaleX(0.9506);">Advanced</span>
<span class="t" id="t38" style="left:850.30px;top:161.59px;font-size:12.3px;color:#f2f2f2;transform:scaleX(0.9465);">Sort &amp; Filter</span>
<span class="t" id="t39" style="left:1013.00px;top:122.39px;font-size:12.3px;color:#f2f2f2;transform:scaleX(0.9176);">Text to</span>
<span class="t" id="t40" style="left:1005.50px;top:138.19px;font-size:12.3px;color:#f2f2f2;transform:scaleX(0.9788);">Columns</span>
<span class="t" id="t41" style="left:1049.25px;top:161.59px;font-size:12.3px;color:#f2f2f2;transform:scaleX(0.9069);">Data Tools</span>
<span class="t" id="t42" style="left:15.50px;top:193.86px;font-size:12.8px;color:#e6e6e6;transform:scaleX(0.8478);">J10</span>
<span class="t" id="t43" style="left:184.20px;top:190.33px;font-size:16.5px;color:#cfcfcf;font-style:italic;font-family:'Liberation Serif', serif;transform:scaleX(1.2626);">f</span>
<span class="t" id="t44" style="left:190.20px;top:194.14px;font-size:12px;color:#cfcfcf;font-style:italic;font-family:'Liberation Serif', serif;transform:scaleX(1.5390);">x</span>
<span class="t" id="t100" style="left:123.00px;top:698.64px;font-size:14.6px;color:#ffffff;transform:scaleX(0.8927);">Sheet1</span>
<span class="t" id="t101" style="left:190.40px;top:695.78px;font-size:14.2px;color:#3a3a3a;transform:scaleX(0.9206);">Sheet2</span></div>
</body></html>
